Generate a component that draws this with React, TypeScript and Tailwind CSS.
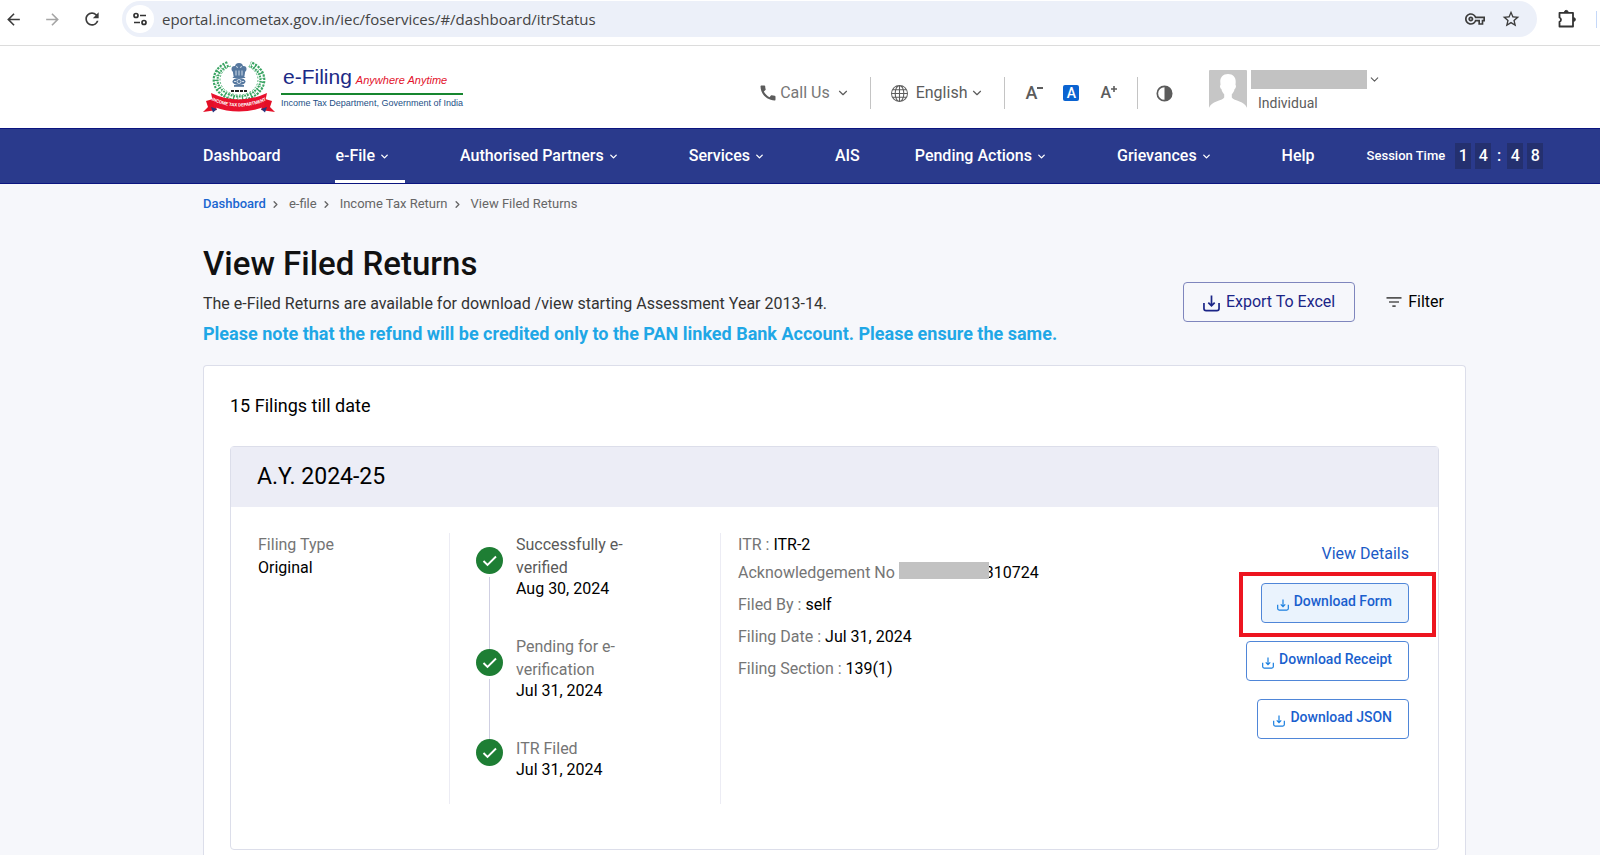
import { ReactNode } from "react";
import { ChevronDown, ChevronRight } from "lucide-react";
import { BsGlobe } from "react-icons/bs";
import {
    MdArrowBack,
    MdArrowForward,
    MdCall,
    MdFilterList,
    MdOutlineVpnKey,
    MdRefresh,
    MdStarBorder,
} from "react-icons/md";

interface NavItem {
    label: string;
    hasMenu?: boolean;
    active?: boolean;
}

interface Step {
    title: string[];
    date: string;
    current?: boolean;
}

const navItems: NavItem[] = [
    { label: "Dashboard" },
    { label: "e-File", hasMenu: true, active: true },
    { label: "Authorised Partners", hasMenu: true },
    { label: "Services", hasMenu: true },
    { label: "AIS" },
    { label: "Pending Actions", hasMenu: true },
    { label: "Grievances", hasMenu: true },
    { label: "Help" },
];

const steps: Step[] = [
    { title: ["Successfully e-", "verified"], date: "Aug 30, 2024", current: true },
    { title: ["Pending for e-", "verification"], date: "Jul 31, 2024" },
    { title: ["ITR Filed"], date: "Jul 31, 2024" },
];

function DownloadIcon({ size }: { size: number }) {
    return (
        <svg width={size} height={size} viewBox="0 0 16 16" fill="none" stroke="currentColor" strokeWidth="1.6" aria-hidden="true">
            <path d="M8 0.5v9.5M5 7.2l3 3 3-3" />
            <path d="M0.9 7.5v5.2a2 2 0 0 0 2 2h10.2a2 2 0 0 0 2-2V7.5" />
        </svg>
    );
}

function Emblem() {
    return (
        <svg width="74" height="54" viewBox="0 0 74 54" aria-hidden="true">
            {/* laurel wreath */}
            <g fill="none" stroke="#3aa463">
                <path d="M25 4C9 10 8 29 25 36Q36 41 47 36C64 29 63 10 47 4" strokeWidth="6" strokeDasharray="2 1" />
                <path d="M25 4C9 10 8 29 25 36Q36 41 47 36C64 29 63 10 47 4" stroke="#ffffff" strokeWidth="1.8" strokeDasharray="3 1.5" />
                <path d="M28 6C14 11 13 27 27 33Q36 37 45 33C59 27 58 11 44 6" strokeWidth="0.8" strokeDasharray="2 1.5" />
            </g>
            {/* lion capital */}
            <g fill="#56789f">
                <circle cx="36" cy="7" r="4" />
                <circle cx="31.5" cy="9" r="3" />
                <circle cx="40.5" cy="9" r="3" />
                <path d="M29.500 9h13l-1 7h-11z" />
                <path d="M31 16h10l1.500 2h-13z" />
                <ellipse cx="36" cy="21.500" rx="6.500" ry="3.600" />
                <path d="M31 25h10v1.800H31z" />
            </g>
            <g fill="none" stroke="#dfe8f2" strokeWidth="0.9">
                <path d="M33 6.500l2 1M37 7.500l2-1M33 10.500v5M36 10.500v5M39 10.500v5" />
                <circle cx="36" cy="21.500" r="2" />
                <path d="M31 21.500h2M39 21.500h2" />
            </g>
            <path d="M28 31h3M32 31h4M37 31h3M41 31h3" stroke="#222" strokeWidth="1.800" />
            {/* ribbon */}
            <path d="M3 41l7-2 4 11-14 2 5-5z" fill="#e30f26" />
            <path d="M69 41l-7-2-4 11 14 2-5-5z" fill="#e30f26" />
            <path d="M8 47l6 2-4 3.500zM64 47l-6 2 4 3.500z" fill="#27377f" />
            <path d="M8 33q28 13 56 0l-3 14q-25 9-50 0z" fill="#e8112d" />
            <path id="ribbon-line" d="M9 40.500q27 12 54 0" fill="none" />
            <text fontSize="4.500" fontWeight="700" fill="#ffffff" fontFamily="Roboto, sans-serif">
                <textPath href="#ribbon-line" startOffset="50%" textAnchor="middle">
                    INCOME TAX DEPARTMENT
                </textPath>
            </text>
        </svg>
    );
}

function BrowserBar() {
    return (
        <div className="flex h-[46px] items-start border-b border-[#dcdcdc] bg-white pt-px text-[#3c3c3c]">
            <div className="flex h-9 w-[122px] shrink-0 items-center gap-5 pl-1">
                <button aria-label="Back">
                    <MdArrowBack size={19} />
                </button>
                <button aria-label="Forward" className="text-[#a5a5a5]">
                    <MdArrowForward size={19} />
                </button>
                <button aria-label="Reload">
                    <MdRefresh size={20} />
                </button>
            </div>
            <div className="flex h-9 flex-1 items-center rounded-full bg-[#ecf0f9] pl-1 pr-4">
                <button aria-label="Site information" className="flex size-7 items-center justify-center rounded-full bg-white">
                    <svg width="14" height="14" viewBox="0 0 14 14" fill="none" stroke="#333" strokeWidth="1.7">
                        <circle cx="3" cy="3.500" r="2" />
                        <path d="M7 3.500h6M1 10.500h6" />
                        <circle cx="11" cy="10.500" r="2" />
                    </svg>
                </button>
                <input
                    aria-label="Address"
                    readOnly
                    value="eportal.incometax.gov.in/iec/foservices/#/dashboard/itrStatus"
                    className="ml-2 min-w-0 flex-1 bg-transparent font-['Open_Sans',sans-serif] text-[15px] text-[#444] outline-none"
                />
                <button aria-label="Passwords">
                    <MdOutlineVpnKey size={20} />
                </button>
                <button aria-label="Bookmark" className="ml-4">
                    <MdStarBorder size={20} />
                </button>
            </div>
            <div className="flex h-9 w-[63px] shrink-0 items-center justify-between pl-5">
                <button aria-label="Extensions">
                    <svg width="20" height="20" viewBox="0 0 20 20" fill="none" stroke="#333" strokeWidth="1.800" strokeLinejoin="round">
                        <path d="M2.500 3.800h13.500v13.700H2.500v-4.700a2.300 2.300 0 0 0 0-4.300z" />
                        <path d="M7.500 3.200a1.800 1.800 0 0 1 3.600 0zM16.600 8.700a1.800 1.800 0 0 1 0 3.600z" fill="#333" strokeWidth="1" />
                    </svg>
                </button>
                <span className="mr-[3px] h-[17px] w-px bg-[#c5d8f8]" />
            </div>
        </div>
    );
}

function Divider() {
    return <span className="h-8 w-px bg-[#c4c4c4]" />;
}

function Header() {
    return (
        <header className="flex h-[82px] items-center justify-between bg-white pl-[203px] pr-[219px]">
            <a href="#" className="flex items-center gap-1">
                <Emblem />
                <span className="font-['Liberation_Sans',sans-serif]">
                    <span className="flex items-baseline gap-1 border-b-2 border-[#17862f] pl-0.5">
                        <span className="text-[21px] leading-[26px] text-[#1c2a86]">e-Filing</span>
                        <span className="text-[11px] italic leading-[26px] text-[#e3122b]">Anywhere Anytime</span>
                    </span>
                    <span className="block whitespace-nowrap text-[9px] leading-4 text-[#1c4f86]">
                        Income Tax Department, Government of India
                    </span>
                </span>
            </a>
            <div className="flex items-center pt-3 text-[#5c5c5c]">
                <button className="flex items-center">
                    <MdCall size={20} />
                    <span className="ml-0.5 text-[#777]">Call Us</span>
                    <ChevronDown size={14} className="ml-1.5" />
                </button>
                <span className="w-5" />
                <Divider />
                <button className="ml-5 flex items-center">
                    <BsGlobe size={17} />
                    <span className="ml-2">English</span>
                    <ChevronDown size={14} className="ml-[3px]" />
                </button>
                <span className="w-5" />
                <Divider />
                <button aria-label="Decrease text size" className="ml-5 flex items-start">
                    <span className="text-lg font-medium leading-5">A</span>
                    <svg width="6" height="8" viewBox="0 0 6 8" stroke="currentColor" strokeWidth="2">
                        <path d="M0 5h6" />
                    </svg>
                </button>
                <button
                    aria-label="Normal text size"
                    className="ml-5 size-4 rounded-xs bg-[#0a63d1] text-sm font-medium leading-4 text-white"
                >
                    A
                </button>
                <button aria-label="Increase text size" className="ml-[21px] flex items-start">
                    <span className="font-medium leading-5">A</span>
                    <svg width="6" height="10" viewBox="0 0 6 10" stroke="currentColor" strokeWidth="1.6">
                        <path d="M0 6h6M3 3v6" />
                    </svg>
                </button>
                <span className="w-5" />
                <Divider />
                <button aria-label="Contrast" className="ml-[18px]">
                    <svg width="17" height="17" viewBox="0 0 17 17">
                        <circle cx="8.500" cy="8.500" r="7.200" fill="none" stroke="currentColor" strokeWidth="1.700" />
                        <path d="M8.500 1.300a7.200 7.200 0 0 1 0 14.400z" fill="currentColor" />
                    </svg>
                </button>
                <button className="mb-1 ml-9 flex items-start">
                    <svg width="38" height="38" viewBox="0 0 38 38" aria-hidden="true">
                        <rect width="38" height="38" rx="1" fill="#c6c6c6" />
                        <path
                            d="M19 4c-5 0-8 3.500-7.700 8l.2 3c-.9.300-.4 3.400.9 4 .5 2.500 1.500 4 2.800 5.200v3.300C13 31 2 31 0 38h38c-2-7-13-7-15.200-10.500v-3.300c1.300-1.200 2.300-2.700 2.800-5.200 1.300-.6 1.800-3.700.9-4l.2-3C27 7.500 24 4 19 4z"
                            fill="#ffffff"
                        />
                    </svg>
                    <span className="ml-1 flex flex-col items-start">
                        <span className="flex items-center gap-px">
                            <span className="h-[19px] w-[116px] bg-[#c2c2c2]" />
                            <ChevronDown size={13} />
                        </span>
                        <span className="ml-[7px] mt-1 text-sm leading-5">Individual</span>
                    </span>
                </button>
            </div>
        </header>
    );
}

function SessionDigit({ children }: { children: ReactNode }) {
    return <span className="h-[26px] w-4 bg-[#24306f] text-center leading-[26px]">{children}</span>;
}

function NavBar() {
    return (
        <nav className="flex h-14 items-stretch gap-[55px] whitespace-nowrap border-y border-[#0b1580] bg-[#2a3a8c] pl-[203px] text-base font-medium text-white">
            {navItems.map((item) => (
                <a
                    key={item.label}
                    href="#"
                    className={`flex items-center gap-1 ${item.hasMenu ? "pr-[15px]" : ""} ${
                        item.active ? "border-b-3 border-white pt-[3px]" : ""
                    }`}
                >
                    {item.label}
                    {item.hasMenu && <ChevronDown size={11} strokeWidth={3} />}
                </a>
            ))}
            <div className="-ml-[3px] flex items-center gap-1">
                <span className="mr-1.5 text-[13px]">Session Time</span>
                <SessionDigit>1</SessionDigit>
                <SessionDigit>4</SessionDigit>
                <span className="w-2 text-center">:</span>
                <SessionDigit>4</SessionDigit>
                <SessionDigit>8</SessionDigit>
            </div>
        </nav>
    );
}

function StepCheck() {
    return (
        <svg width="27" height="27" viewBox="0 0 27 27" className="shrink-0" aria-hidden="true">
            <circle cx="13.500" cy="13.500" r="13.500" fill="#1e7e34" />
            <path d="M7.500 14l4 4 8.500-8.500" fill="none" stroke="#ffffff" strokeWidth="1.900" />
        </svg>
    );
}

function Detail({ label, children }: { label: string; children: ReactNode }) {
    return (
        <div className="flex h-8 items-center gap-1">
            <dt className="text-[#757575]">{label} :</dt>
            <dd className="text-black">{children}</dd>
        </div>
    );
}

function DownloadButton({ label, highlighted = false }: { label: string; highlighted?: boolean }) {
    return (
        <button
            className={`flex h-10 items-center gap-[5px] rounded border border-[#4f86d8] pl-[15px] pr-4 text-sm font-medium text-[#1a5fce] ${
                highlighted ? "bg-[#eaf3fd]" : "bg-white"
            }`}
        >
            <span className="mt-1 text-[#1a7fe0]">
                <DownloadIcon size={12} />
            </span>
            <span className="mb-1">{label}</span>
        </button>
    );
}

function FilingCard() {
    return (
        <article className="mt-7 rounded border border-[#dcdeea]">
            <h3 className="flex h-[60px] items-center bg-[#ecedf6] px-[26px] text-[23px] text-black">A.Y. 2024-25</h3>
            <div className="flex pb-[45px] pl-[27px] pr-[29px] pt-[26px] leading-[23px]">
                <div className="w-[192px] shrink-0 border-r border-[#ececf4]">
                    <p className="text-[#757575]">Filing Type</p>
                    <p className="text-black">Original</p>
                </div>
                <div className="flex h-[271px] w-[271px] shrink-0 border-r border-[#ececf4] pl-[26px]">
                    <div className="flex flex-col items-center pt-3.5">
                        <StepCheck />
                        <span className="mt-[3px] h-[72px] w-px bg-[#cfcfe2]" />
                        <StepCheck />
                        <span className="mt-[3px] h-[60px] w-px bg-[#cfcfe2]" />
                        <StepCheck />
                    </div>
                    <ol className="ml-[13px]">
                        {steps.map((step) => (
                            <li key={step.title[0]} className="h-[102px]">
                                {step.title.map((line) => (
                                    <p key={line} className={step.current ? "text-[#5a5a5a]" : "text-[#757575]"}>
                                        {line}
                                    </p>
                                ))}
                                <p className="leading-5 text-black">{step.date}</p>
                            </li>
                        ))}
                    </ol>
                </div>
                <dl className="-mt-[5px] flex-1 pl-[17px]">
                    <Detail label="ITR">ITR-2</Detail>
                    <div className="-mt-1">
                        <Detail label="Acknowledgement No">
                            <span className="flex items-center">
                                <span className="relative -ml-2 -mr-1 mb-1 h-[17px] w-[90px] bg-[#c2c2c2]" />
                                <span>310724</span>
                            </span>
                        </Detail>
                    </div>
                    <Detail label="Filed By">self</Detail>
                    <Detail label="Filing Date">Jul 31, 2024</Detail>
                    <Detail label="Filing Section">139(1)</Detail>
                </dl>
                <div className="flex flex-col items-end pt-[9px]">
                    <a href="#" className="text-[#1a5bc6]">
                        View Details
                    </a>
                    <div className="relative mt-[18px]">
                        <DownloadButton label="Download Form" highlighted />
                        <span className="pointer-events-none absolute -bottom-3.5 -left-[22px] -right-[27px] -top-[11px] border-4 border-[#ed1520]" />
                    </div>
                    <div className="mt-[18px] flex flex-col items-end gap-[18px]">
                        <DownloadButton label="Download Receipt" />
                        <DownloadButton label="Download JSON" />
                    </div>
                </div>
            </div>
        </article>
    );
}

const crumbs = ["Dashboard", "e-file", "Income Tax Return", "View Filed Returns"];

export default function App() {
    return (
        <div className="min-h-screen bg-[#f6f7fb] font-[Roboto,sans-serif] text-base">
            <BrowserBar />
            <Header />
            <NavBar />
            <main className="pl-[203px] pr-[134px]">
                <nav aria-label="Breadcrumb" className="flex h-10 items-center text-[13px] text-[#666]">
                    {crumbs.map((crumb, index) => (
                        <span key={crumb} className="flex items-center">
                            <a href="#" className={index === 0 ? "font-medium text-[#1a66d0]" : ""}>
                                {crumb}
                            </a>
                            {index < crumbs.length - 1 && <ChevronRight size={11} strokeWidth={3} className="ml-1 mr-2" />}
                        </span>
                    ))}
                </nav>
                <div className="flex items-start justify-between">
                    <div>
                        <h1 className="mt-[19px] text-[33px] font-medium leading-[42px] text-[#111]">View Filed Returns</h1>
                        <p className="mt-1 leading-[30px] text-[#333]">
                            The e-Filed Returns are available for download /view starting Assessment Year 2013-14.
                        </p>
                        <p className="text-lg font-bold leading-[30px] text-[#1fa7e6]">
                            Please note that the refund will be credited only to the PAN linked Bank Account. Please ensure the same.
                        </p>
                    </div>
                    <div className="mt-[58px] flex items-center">
                        <button className="flex h-10 items-center gap-1.5 rounded border border-[#7f86bd] px-[19px] text-[#1b2587]">
                            <span className="mt-0.5">
                                <DownloadIcon size={17} />
                            </span>
                            Export To Excel
                        </button>
                        <button className="ml-[29px] mr-[22px] flex items-center gap-1 text-black">
                            <MdFilterList size={20} className="text-[#555]" />
                            Filter
                        </button>
                    </div>
                </div>
                <section className="mt-4 rounded-t border border-b-0 border-[#dcdeea] bg-white px-[26px] pb-6 pt-7">
                    <h2 className="text-lg leading-6 text-black">15 Filings till date</h2>
                    <FilingCard />
                </section>
            </main>
        </div>
    );
}
